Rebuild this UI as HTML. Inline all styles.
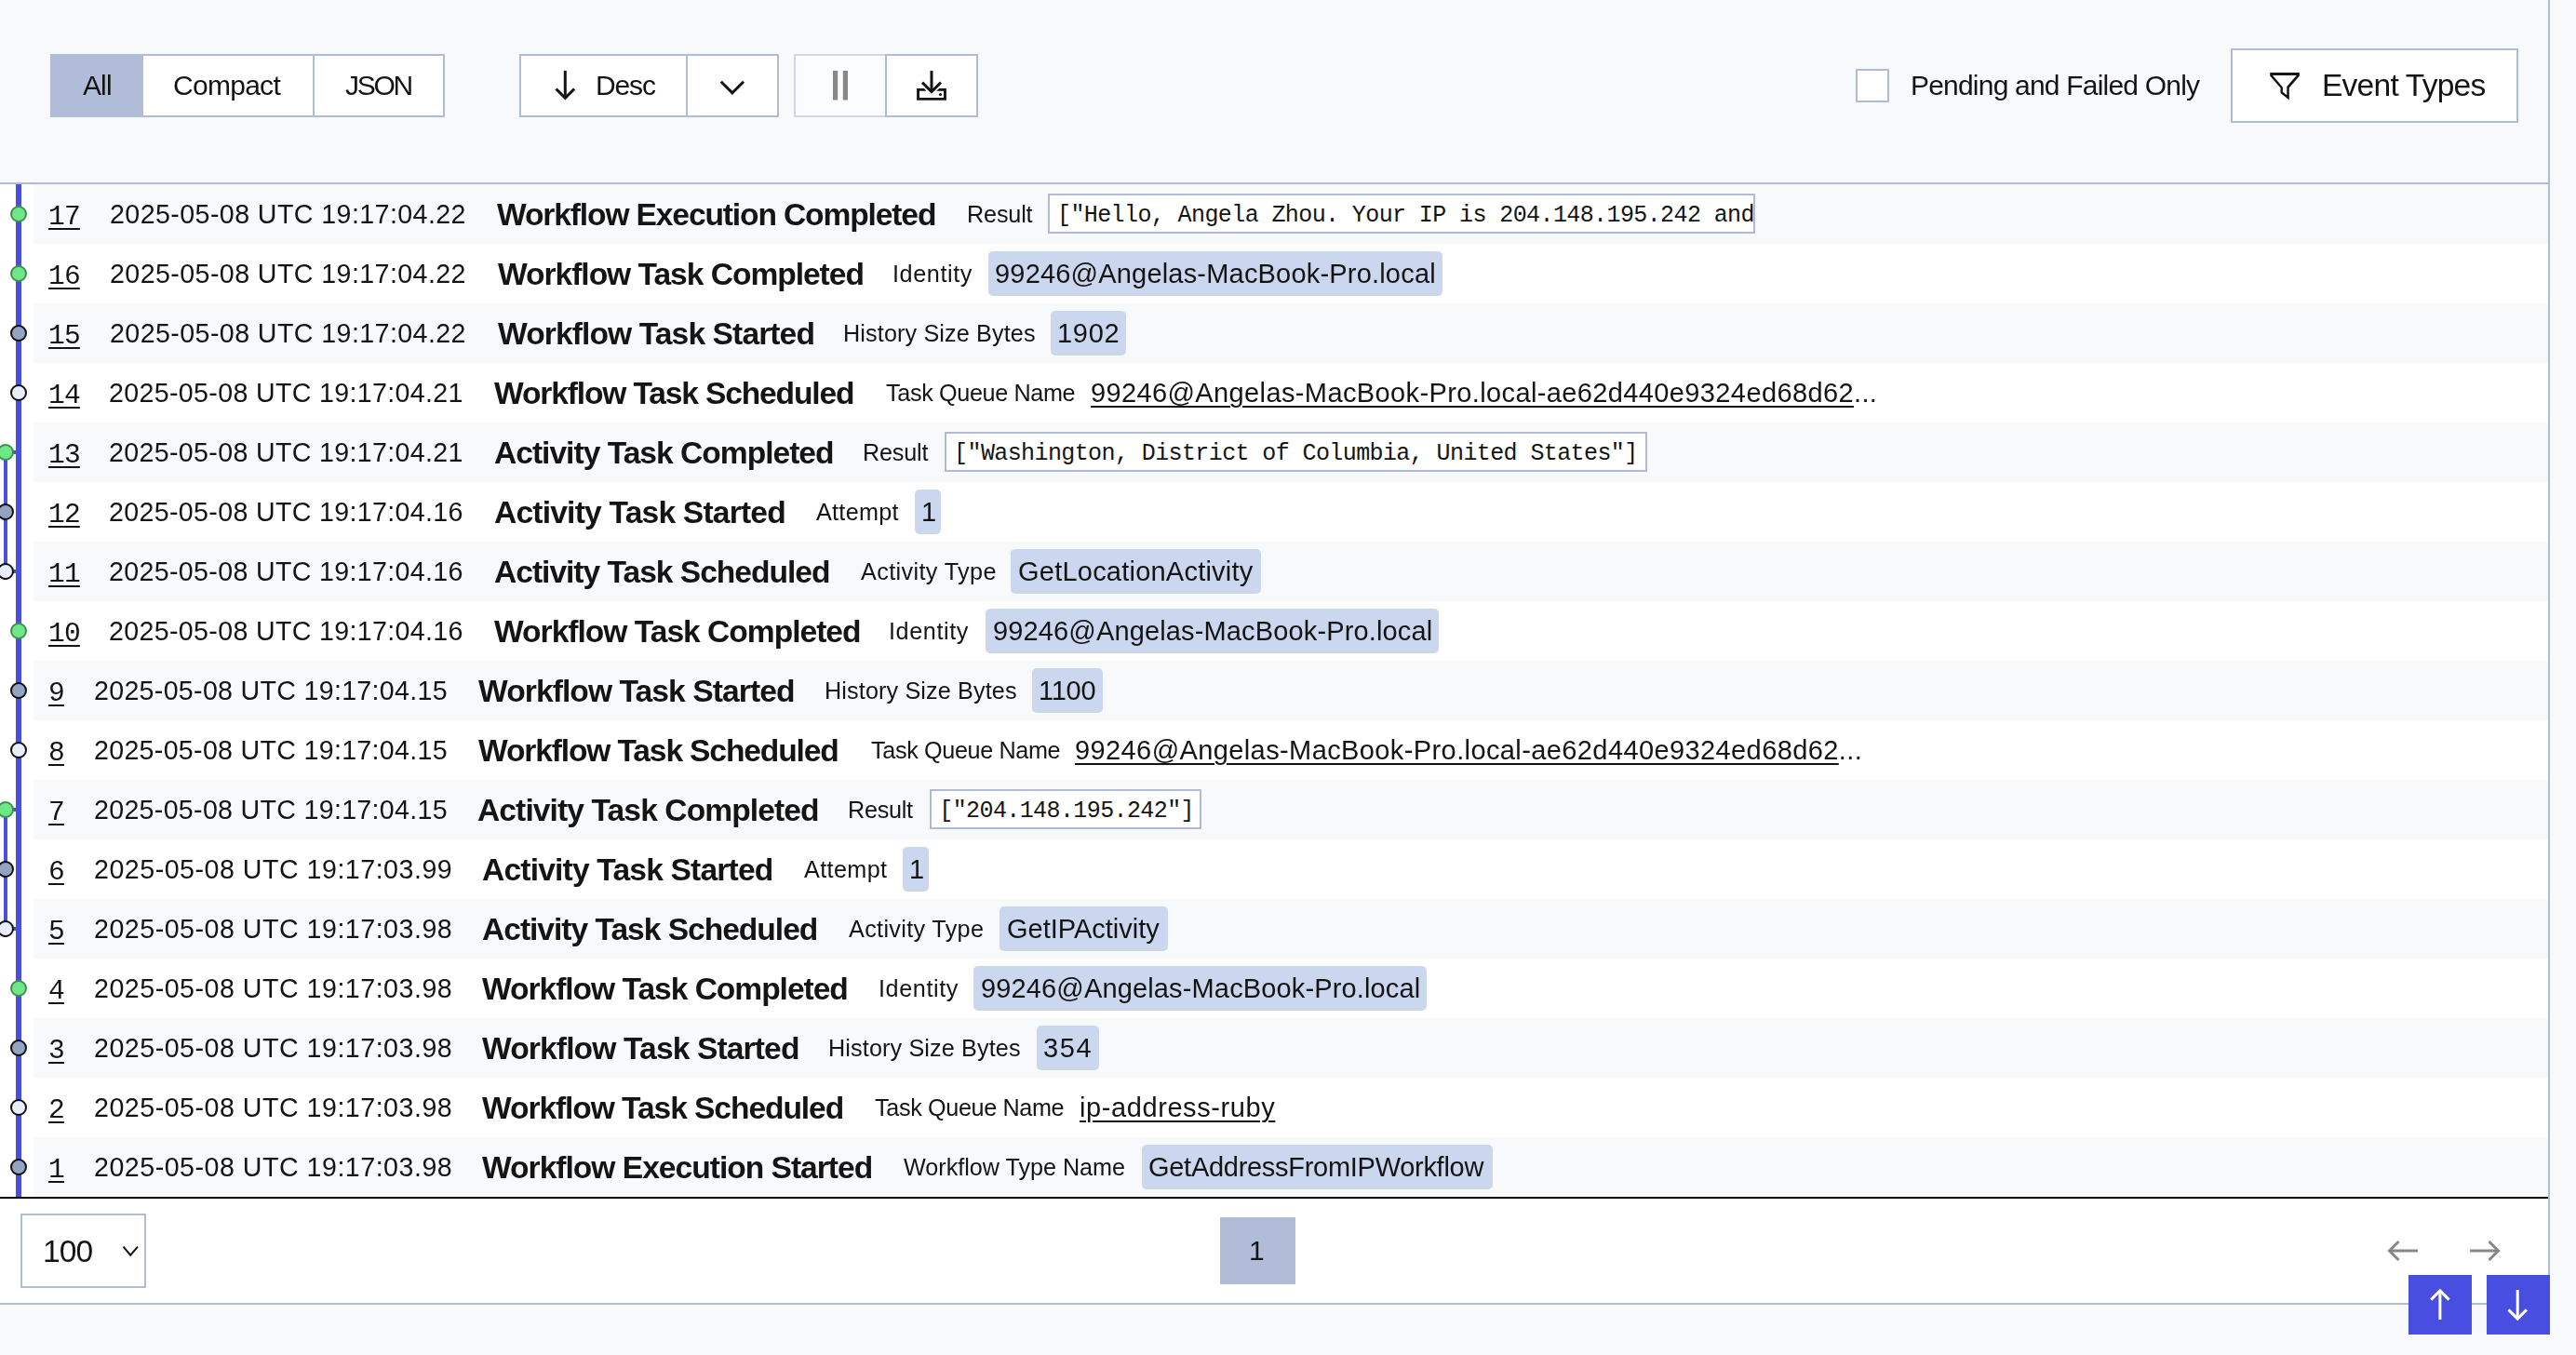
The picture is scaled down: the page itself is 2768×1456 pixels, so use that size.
<!DOCTYPE html><html><head><meta charset="utf-8"><style>
html,body{margin:0;padding:0;width:2768px;height:1456px;overflow:hidden;background:#f8f9fb;}
.t{position:absolute;white-space:pre;will-change:transform;}
.a{position:absolute;box-sizing:border-box;}
</style></head><body>

<div class=a style='left:0;top:0;width:2740px;height:1402px;border-right:2px solid #afbcd8;border-bottom:2px solid #afbcd8;background:#f8f9fb'></div>
<div class=a style='left:0;top:196px;width:2738px;height:2px;background:#afbcd8'></div>
<div class=a style='left:0;top:198px;width:2738px;height:1088px;background:#fff'></div>
<div class=a style='left:36px;top:198px;width:2702px;height:64px;background:#f8f9fb'></div>
<div class=a style='left:36px;top:326px;width:2702px;height:64px;background:#f8f9fb'></div>
<div class=a style='left:36px;top:454px;width:2702px;height:64px;background:#f8f9fb'></div>
<div class=a style='left:36px;top:582px;width:2702px;height:64px;background:#f8f9fb'></div>
<div class=a style='left:36px;top:710px;width:2702px;height:64px;background:#f8f9fb'></div>
<div class=a style='left:36px;top:838px;width:2702px;height:64px;background:#f8f9fb'></div>
<div class=a style='left:36px;top:966px;width:2702px;height:64px;background:#f8f9fb'></div>
<div class=a style='left:36px;top:1094px;width:2702px;height:64px;background:#f8f9fb'></div>
<div class=a style='left:36px;top:1222px;width:2702px;height:64px;background:#f8f9fb'></div>
<div class=a style='left:0;top:1286px;width:2738px;height:2px;background:#000'></div>
<div class=a style='left:0;top:1288px;width:2738px;height:112px;background:#fff'></div>
<div class=a style='left:54px;top:58px;width:424px;height:68px;background:#fff;border:2px solid #afbcd8;'></div>
<div class=a style='left:54px;top:58px;width:100px;height:68px;background:#b1bcd8'></div>
<div class=a style='left:336px;top:58px;width:2px;height:68px;background:#afbcd8'></div>
<div class=a style='left:558px;top:58px;width:279px;height:68px;background:#fff;border:2px solid #afbcd8;'></div>
<div class=a style='left:737px;top:58px;width:2px;height:68px;background:#afbcd8'></div>
<div class=a style='left:853px;top:58px;width:198px;height:68px;background:#fbfcfd;border:2px solid #d0d8e8;'></div>
<div class=a style='left:951px;top:58px;width:100px;height:68px;background:#fff;border:2px solid #afbcd8;'></div>
<div class=a style='left:1994px;top:74px;width:36px;height:36px;background:#fff;border:2px solid #afbcd8;'></div>
<div class=a style='left:2397px;top:52px;width:309px;height:80px;background:#fff;border:2px solid #afbcd8;'></div>
<div class=a style='left:22px;top:1304px;width:135px;height:80px;background:#fff;border:2px solid #afbcd8;'></div>
<div class=a style='left:1311px;top:1308px;width:81px;height:72px;background:#b1bcd8'></div>
<div class=a style='left:2588px;top:1370px;width:68px;height:64px;background:#474ee0'></div>
<div class=a style='left:2672px;top:1370px;width:68px;height:64px;background:#474ee0'></div>
<div class=t style="left:88.50px;top:71.60px;line-height:40px;font-family:'Liberation Sans',sans-serif;font-weight:400;font-size:30.0px;letter-spacing:-0.887px;color:#141414;">All</div>
<div class=t style="left:186.00px;top:71.60px;line-height:40px;font-family:'Liberation Sans',sans-serif;font-weight:400;font-size:30.0px;letter-spacing:-0.718px;color:#141414;">Compact</div>
<div class=t style="left:371.00px;top:71.60px;line-height:40px;font-family:'Liberation Sans',sans-serif;font-weight:400;font-size:30.0px;letter-spacing:-2.315px;color:#141414;">JSON</div>
<div class=t style="left:639.50px;top:71.70px;line-height:40px;font-family:'Liberation Sans',sans-serif;font-weight:400;font-size:30.0px;letter-spacing:-1.117px;color:#141414;">Desc</div>
<div class=t style="left:2053.40px;top:72.40px;line-height:40px;font-family:'Liberation Sans',sans-serif;font-weight:400;font-size:30.0px;letter-spacing:-0.798px;color:#141414;">Pending and Failed Only</div>
<div class=t style="left:2494.80px;top:72.40px;line-height:40px;font-family:'Liberation Sans',sans-serif;font-weight:400;font-size:33.6px;letter-spacing:-0.789px;color:#141414;">Event Types</div>
<div class=t style="left:46.40px;top:1324.80px;line-height:40px;font-family:'Liberation Sans',sans-serif;font-weight:400;font-size:33.6px;letter-spacing:-0.875px;color:#141414;">100</div>
<div class=t style="left:1342.40px;top:1324.00px;line-height:40px;font-family:'Liberation Sans',sans-serif;font-weight:400;font-size:30.0px;letter-spacing:0.000px;color:#141414;">1</div>
<div class=t style="left:52px;top:212.70px;line-height:40px;font-family:'Liberation Mono',monospace;font-weight:400;font-size:29.6px;letter-spacing:-0.860px;color:#141414;text-decoration:underline;text-decoration-thickness:2px;text-underline-offset:4px">17</div>
<div class=t style="left:118.20px;top:210.00px;line-height:40px;font-family:'Liberation Sans',sans-serif;font-weight:400;font-size:28.6px;letter-spacing:0.421px;color:#141414;">2025-05-08 UTC 19:17:04.22</div>
<div class=t style="left:534.40px;top:210.60px;line-height:40px;font-family:'Liberation Sans',sans-serif;font-weight:700;font-size:33.6px;letter-spacing:-1.137px;color:#141414;">Workflow Execution Completed</div>
<div class=t style="left:1038.50px;top:210.20px;line-height:40px;font-family:'Liberation Sans',sans-serif;font-weight:400;font-size:25.2px;letter-spacing:-0.159px;color:#141414;">Result</div>
<div class=a style="left:1126px;top:208.0px;width:760.0px;height:43px;background:#fff;border:2px solid #afbcd8;overflow:hidden;padding:0 8px;white-space:pre;line-height:39px;font-family:'Liberation Mono',monospace;font-weight:400;font-size:25.0px;letter-spacing:-0.600px;color:#141414"><span style='position:relative;top:1.5px'>[&quot;Hello, Angela Zhou. Your IP is 204.148.195.242 and your location is Washington, District of Columbia, United States&quot;]</span></div>
<div class=t style="left:52px;top:276.70px;line-height:40px;font-family:'Liberation Mono',monospace;font-weight:400;font-size:29.6px;letter-spacing:-0.860px;color:#141414;text-decoration:underline;text-decoration-thickness:2px;text-underline-offset:4px">16</div>
<div class=t style="left:118.20px;top:274.00px;line-height:40px;font-family:'Liberation Sans',sans-serif;font-weight:400;font-size:28.6px;letter-spacing:0.421px;color:#141414;">2025-05-08 UTC 19:17:04.22</div>
<div class=t style="left:534.60px;top:274.60px;line-height:40px;font-family:'Liberation Sans',sans-serif;font-weight:700;font-size:33.6px;letter-spacing:-1.035px;color:#141414;">Workflow Task Completed</div>
<div class=t style="left:958.60px;top:274.20px;line-height:40px;font-family:'Liberation Sans',sans-serif;font-weight:400;font-size:25.2px;letter-spacing:0.598px;color:#141414;">Identity</div>
<div class=a style='left:1061.7px;top:270.0px;width:488.2px;height:48px;background:#cbd7ee;border-radius:5px'></div>
<div class=t style="left:1069.20px;top:274.00px;line-height:40px;font-family:'Liberation Sans',sans-serif;font-weight:400;font-size:29.0px;letter-spacing:0.191px;color:#141414;">99246@Angelas-MacBook-Pro.local</div>
<div class=t style="left:52px;top:340.70px;line-height:40px;font-family:'Liberation Mono',monospace;font-weight:400;font-size:29.6px;letter-spacing:-0.860px;color:#141414;text-decoration:underline;text-decoration-thickness:2px;text-underline-offset:4px">15</div>
<div class=t style="left:118.20px;top:338.00px;line-height:40px;font-family:'Liberation Sans',sans-serif;font-weight:400;font-size:28.6px;letter-spacing:0.421px;color:#141414;">2025-05-08 UTC 19:17:04.22</div>
<div class=t style="left:534.60px;top:338.60px;line-height:40px;font-family:'Liberation Sans',sans-serif;font-weight:700;font-size:33.6px;letter-spacing:-0.898px;color:#141414;">Workflow Task Started</div>
<div class=t style="left:906.00px;top:338.20px;line-height:40px;font-family:'Liberation Sans',sans-serif;font-weight:400;font-size:25.2px;letter-spacing:0.132px;color:#141414;">History Size Bytes</div>
<div class=a style='left:1129.2px;top:334.0px;width:80.6px;height:48px;background:#cbd7ee;border-radius:5px'></div>
<div class=t style="left:1135.70px;top:338.00px;line-height:40px;font-family:'Liberation Sans',sans-serif;font-weight:400;font-size:29.0px;letter-spacing:0.738px;color:#141414;">1902</div>
<div class=t style="left:52px;top:404.70px;line-height:40px;font-family:'Liberation Mono',monospace;font-weight:400;font-size:29.6px;letter-spacing:-0.860px;color:#141414;text-decoration:underline;text-decoration-thickness:2px;text-underline-offset:4px">14</div>
<div class=t style="left:117.40px;top:402.00px;line-height:40px;font-family:'Liberation Sans',sans-serif;font-weight:400;font-size:28.6px;letter-spacing:0.337px;color:#141414;">2025-05-08 UTC 19:17:04.21</div>
<div class=t style="left:531.00px;top:402.60px;line-height:40px;font-family:'Liberation Sans',sans-serif;font-weight:700;font-size:33.6px;letter-spacing:-1.157px;color:#141414;">Workflow Task Scheduled</div>
<div class=t style="left:952.20px;top:402.20px;line-height:40px;font-family:'Liberation Sans',sans-serif;font-weight:400;font-size:25.2px;letter-spacing:-0.356px;color:#141414;">Task Queue Name</div>
<div class=t style="left:1171.50px;top:402.00px;line-height:40px;font-family:'Liberation Sans',sans-serif;font-weight:400;font-size:29.0px;letter-spacing:0.381px;color:#141414;"><span style='text-decoration:underline;text-decoration-thickness:2px;text-underline-offset:4px;text-decoration-skip-ink:auto'>99246@Angelas-MacBook-Pro.local-ae62d440e9324ed68d62</span>...</div>
<div class=t style="left:52px;top:468.70px;line-height:40px;font-family:'Liberation Mono',monospace;font-weight:400;font-size:29.6px;letter-spacing:-0.860px;color:#141414;text-decoration:underline;text-decoration-thickness:2px;text-underline-offset:4px">13</div>
<div class=t style="left:117.40px;top:466.00px;line-height:40px;font-family:'Liberation Sans',sans-serif;font-weight:400;font-size:28.6px;letter-spacing:0.337px;color:#141414;">2025-05-08 UTC 19:17:04.21</div>
<div class=t style="left:531.00px;top:466.60px;line-height:40px;font-family:'Liberation Sans',sans-serif;font-weight:700;font-size:33.6px;letter-spacing:-0.999px;color:#141414;">Activity Task Completed</div>
<div class=t style="left:926.90px;top:466.20px;line-height:40px;font-family:'Liberation Sans',sans-serif;font-weight:400;font-size:25.2px;letter-spacing:-0.199px;color:#141414;">Result</div>
<div class=a style="left:1015.1px;top:464.0px;width:754.6px;height:43px;background:#fff;border:2px solid #afbcd8;overflow:hidden;padding:0 8px;white-space:pre;line-height:39px;font-family:'Liberation Mono',monospace;font-weight:400;font-size:25.0px;letter-spacing:-0.600px;color:#141414"><span style='position:relative;top:1.5px'>[&quot;Washington, District of Columbia, United States&quot;]</span></div>
<div class=t style="left:52px;top:532.70px;line-height:40px;font-family:'Liberation Mono',monospace;font-weight:400;font-size:29.6px;letter-spacing:-0.860px;color:#141414;text-decoration:underline;text-decoration-thickness:2px;text-underline-offset:4px">12</div>
<div class=t style="left:117.40px;top:530.00px;line-height:40px;font-family:'Liberation Sans',sans-serif;font-weight:400;font-size:28.6px;letter-spacing:0.337px;color:#141414;">2025-05-08 UTC 19:17:04.16</div>
<div class=t style="left:531.00px;top:530.60px;line-height:40px;font-family:'Liberation Sans',sans-serif;font-weight:700;font-size:33.6px;letter-spacing:-0.799px;color:#141414;">Activity Task Started</div>
<div class=t style="left:877.30px;top:530.20px;line-height:40px;font-family:'Liberation Sans',sans-serif;font-weight:400;font-size:25.2px;letter-spacing:0.284px;color:#141414;">Attempt</div>
<div class=a style='left:983px;top:526.0px;width:28.4px;height:48px;background:#cbd7ee;border-radius:5px'></div>
<div class=t style="left:989.50px;top:530.00px;line-height:40px;font-family:'Liberation Sans',sans-serif;font-weight:400;font-size:29.0px;letter-spacing:0.000px;color:#141414;">1</div>
<div class=t style="left:52px;top:596.70px;line-height:40px;font-family:'Liberation Mono',monospace;font-weight:400;font-size:29.6px;letter-spacing:-0.860px;color:#141414;text-decoration:underline;text-decoration-thickness:2px;text-underline-offset:4px">11</div>
<div class=t style="left:117.40px;top:594.00px;line-height:40px;font-family:'Liberation Sans',sans-serif;font-weight:400;font-size:28.6px;letter-spacing:0.337px;color:#141414;">2025-05-08 UTC 19:17:04.16</div>
<div class=t style="left:531.00px;top:594.60px;line-height:40px;font-family:'Liberation Sans',sans-serif;font-weight:700;font-size:33.6px;letter-spacing:-1.013px;color:#141414;">Activity Task Scheduled</div>
<div class=t style="left:924.80px;top:594.20px;line-height:40px;font-family:'Liberation Sans',sans-serif;font-weight:400;font-size:25.2px;letter-spacing:0.378px;color:#141414;">Activity Type</div>
<div class=a style='left:1086px;top:590.0px;width:268.8px;height:48px;background:#cbd7ee;border-radius:5px'></div>
<div class=t style="left:1093.50px;top:594.00px;line-height:40px;font-family:'Liberation Sans',sans-serif;font-weight:400;font-size:29.0px;letter-spacing:0.226px;color:#141414;">GetLocationActivity</div>
<div class=t style="left:52px;top:660.70px;line-height:40px;font-family:'Liberation Mono',monospace;font-weight:400;font-size:29.6px;letter-spacing:-0.860px;color:#141414;text-decoration:underline;text-decoration-thickness:2px;text-underline-offset:4px">10</div>
<div class=t style="left:117.40px;top:658.00px;line-height:40px;font-family:'Liberation Sans',sans-serif;font-weight:400;font-size:28.6px;letter-spacing:0.337px;color:#141414;">2025-05-08 UTC 19:17:04.16</div>
<div class=t style="left:531.00px;top:658.60px;line-height:40px;font-family:'Liberation Sans',sans-serif;font-weight:700;font-size:33.6px;letter-spacing:-1.008px;color:#141414;">Workflow Task Completed</div>
<div class=t style="left:955.40px;top:658.20px;line-height:40px;font-family:'Liberation Sans',sans-serif;font-weight:400;font-size:25.2px;letter-spacing:0.598px;color:#141414;">Identity</div>
<div class=a style='left:1059px;top:654.0px;width:486.7px;height:48px;background:#cbd7ee;border-radius:5px'></div>
<div class=t style="left:1066.50px;top:658.00px;line-height:40px;font-family:'Liberation Sans',sans-serif;font-weight:400;font-size:29.0px;letter-spacing:0.141px;color:#141414;">99246@Angelas-MacBook-Pro.local</div>
<div class=t style="left:52px;top:724.70px;line-height:40px;font-family:'Liberation Mono',monospace;font-weight:400;font-size:29.6px;letter-spacing:-0.860px;color:#141414;text-decoration:underline;text-decoration-thickness:2px;text-underline-offset:4px">9</div>
<div class=t style="left:100.70px;top:722.00px;line-height:40px;font-family:'Liberation Sans',sans-serif;font-weight:400;font-size:28.6px;letter-spacing:0.305px;color:#141414;">2025-05-08 UTC 19:17:04.15</div>
<div class=t style="left:514.40px;top:722.60px;line-height:40px;font-family:'Liberation Sans',sans-serif;font-weight:700;font-size:33.6px;letter-spacing:-0.923px;color:#141414;">Workflow Task Started</div>
<div class=t style="left:885.50px;top:722.20px;line-height:40px;font-family:'Liberation Sans',sans-serif;font-weight:400;font-size:25.2px;letter-spacing:0.132px;color:#141414;">History Size Bytes</div>
<div class=a style='left:1109.3px;top:718.0px;width:75.4px;height:48px;background:#cbd7ee;border-radius:5px'></div>
<div class=t style="left:1115.80px;top:722.00px;line-height:40px;font-family:'Liberation Sans',sans-serif;font-weight:400;font-size:29.0px;letter-spacing:-0.278px;color:#141414;">1100</div>
<div class=t style="left:52px;top:788.70px;line-height:40px;font-family:'Liberation Mono',monospace;font-weight:400;font-size:29.6px;letter-spacing:-0.860px;color:#141414;text-decoration:underline;text-decoration-thickness:2px;text-underline-offset:4px">8</div>
<div class=t style="left:100.70px;top:786.00px;line-height:40px;font-family:'Liberation Sans',sans-serif;font-weight:400;font-size:28.6px;letter-spacing:0.305px;color:#141414;">2025-05-08 UTC 19:17:04.15</div>
<div class=t style="left:514.40px;top:786.60px;line-height:40px;font-family:'Liberation Sans',sans-serif;font-weight:700;font-size:33.6px;letter-spacing:-1.148px;color:#141414;">Workflow Task Scheduled</div>
<div class=t style="left:935.50px;top:786.20px;line-height:40px;font-family:'Liberation Sans',sans-serif;font-weight:400;font-size:25.2px;letter-spacing:-0.356px;color:#141414;">Task Queue Name</div>
<div class=t style="left:1154.80px;top:786.00px;line-height:40px;font-family:'Liberation Sans',sans-serif;font-weight:400;font-size:29.0px;letter-spacing:0.397px;color:#141414;"><span style='text-decoration:underline;text-decoration-thickness:2px;text-underline-offset:4px;text-decoration-skip-ink:auto'>99246@Angelas-MacBook-Pro.local-ae62d440e9324ed68d62</span>...</div>
<div class=t style="left:52px;top:852.70px;line-height:40px;font-family:'Liberation Mono',monospace;font-weight:400;font-size:29.6px;letter-spacing:-0.860px;color:#141414;text-decoration:underline;text-decoration-thickness:2px;text-underline-offset:4px">7</div>
<div class=t style="left:100.70px;top:850.00px;line-height:40px;font-family:'Liberation Sans',sans-serif;font-weight:400;font-size:28.6px;letter-spacing:0.305px;color:#141414;">2025-05-08 UTC 19:17:04.15</div>
<div class=t style="left:513.20px;top:850.60px;line-height:40px;font-family:'Liberation Sans',sans-serif;font-weight:700;font-size:33.6px;letter-spacing:-0.904px;color:#141414;">Activity Task Completed</div>
<div class=t style="left:911.10px;top:850.20px;line-height:40px;font-family:'Liberation Sans',sans-serif;font-weight:400;font-size:25.2px;letter-spacing:-0.279px;color:#141414;">Result</div>
<div class=a style="left:999.3px;top:848.0px;width:291.6px;height:43px;background:#fff;border:2px solid #afbcd8;overflow:hidden;padding:0 8px;white-space:pre;line-height:39px;font-family:'Liberation Mono',monospace;font-weight:400;font-size:25.0px;letter-spacing:-0.600px;color:#141414"><span style='position:relative;top:1.5px'>[&quot;204.148.195.242&quot;]</span></div>
<div class=t style="left:52px;top:916.70px;line-height:40px;font-family:'Liberation Mono',monospace;font-weight:400;font-size:29.6px;letter-spacing:-0.860px;color:#141414;text-decoration:underline;text-decoration-thickness:2px;text-underline-offset:4px">6</div>
<div class=t style="left:100.70px;top:914.00px;line-height:40px;font-family:'Liberation Sans',sans-serif;font-weight:400;font-size:28.6px;letter-spacing:0.509px;color:#141414;">2025-05-08 UTC 19:17:03.99</div>
<div class=t style="left:518.20px;top:914.60px;line-height:40px;font-family:'Liberation Sans',sans-serif;font-weight:700;font-size:33.6px;letter-spacing:-0.819px;color:#141414;">Activity Task Started</div>
<div class=t style="left:864.20px;top:914.20px;line-height:40px;font-family:'Liberation Sans',sans-serif;font-weight:400;font-size:25.2px;letter-spacing:0.368px;color:#141414;">Attempt</div>
<div class=a style='left:970.4px;top:910.0px;width:28.0px;height:48px;background:#cbd7ee;border-radius:5px'></div>
<div class=t style="left:976.90px;top:914.00px;line-height:40px;font-family:'Liberation Sans',sans-serif;font-weight:400;font-size:29.0px;letter-spacing:0.000px;color:#141414;">1</div>
<div class=t style="left:52px;top:980.70px;line-height:40px;font-family:'Liberation Mono',monospace;font-weight:400;font-size:29.6px;letter-spacing:-0.860px;color:#141414;text-decoration:underline;text-decoration-thickness:2px;text-underline-offset:4px">5</div>
<div class=t style="left:100.70px;top:978.00px;line-height:40px;font-family:'Liberation Sans',sans-serif;font-weight:400;font-size:28.6px;letter-spacing:0.509px;color:#141414;">2025-05-08 UTC 19:17:03.98</div>
<div class=t style="left:518.20px;top:978.60px;line-height:40px;font-family:'Liberation Sans',sans-serif;font-weight:700;font-size:33.6px;letter-spacing:-1.022px;color:#141414;">Activity Task Scheduled</div>
<div class=t style="left:912.20px;top:978.20px;line-height:40px;font-family:'Liberation Sans',sans-serif;font-weight:400;font-size:25.2px;letter-spacing:0.336px;color:#141414;">Activity Type</div>
<div class=a style='left:1074.3px;top:974.0px;width:180.3px;height:48px;background:#cbd7ee;border-radius:5px'></div>
<div class=t style="left:1081.80px;top:978.00px;line-height:40px;font-family:'Liberation Sans',sans-serif;font-weight:400;font-size:29.0px;letter-spacing:-0.003px;color:#141414;">GetIPActivity</div>
<div class=t style="left:52px;top:1044.70px;line-height:40px;font-family:'Liberation Mono',monospace;font-weight:400;font-size:29.6px;letter-spacing:-0.860px;color:#141414;text-decoration:underline;text-decoration-thickness:2px;text-underline-offset:4px">4</div>
<div class=t style="left:100.70px;top:1042.00px;line-height:40px;font-family:'Liberation Sans',sans-serif;font-weight:400;font-size:28.6px;letter-spacing:0.509px;color:#141414;">2025-05-08 UTC 19:17:03.98</div>
<div class=t style="left:518.00px;top:1042.60px;line-height:40px;font-family:'Liberation Sans',sans-serif;font-weight:700;font-size:33.6px;letter-spacing:-1.039px;color:#141414;">Workflow Task Completed</div>
<div class=t style="left:943.70px;top:1042.20px;line-height:40px;font-family:'Liberation Sans',sans-serif;font-weight:400;font-size:25.2px;letter-spacing:0.598px;color:#141414;">Identity</div>
<div class=a style='left:1046.4px;top:1038.0px;width:486.8px;height:48px;background:#cbd7ee;border-radius:5px'></div>
<div class=t style="left:1053.90px;top:1042.00px;line-height:40px;font-family:'Liberation Sans',sans-serif;font-weight:400;font-size:29.0px;letter-spacing:0.144px;color:#141414;">99246@Angelas-MacBook-Pro.local</div>
<div class=t style="left:52px;top:1108.70px;line-height:40px;font-family:'Liberation Mono',monospace;font-weight:400;font-size:29.6px;letter-spacing:-0.860px;color:#141414;text-decoration:underline;text-decoration-thickness:2px;text-underline-offset:4px">3</div>
<div class=t style="left:100.70px;top:1106.00px;line-height:40px;font-family:'Liberation Sans',sans-serif;font-weight:400;font-size:28.6px;letter-spacing:0.509px;color:#141414;">2025-05-08 UTC 19:17:03.98</div>
<div class=t style="left:518.00px;top:1106.60px;line-height:40px;font-family:'Liberation Sans',sans-serif;font-weight:700;font-size:33.6px;letter-spacing:-0.873px;color:#141414;">Workflow Task Started</div>
<div class=t style="left:890.20px;top:1106.20px;line-height:40px;font-family:'Liberation Sans',sans-serif;font-weight:400;font-size:25.2px;letter-spacing:0.132px;color:#141414;">History Size Bytes</div>
<div class=a style='left:1113.9px;top:1102.0px;width:67.6px;height:48px;background:#cbd7ee;border-radius:5px'></div>
<div class=t style="left:1121.40px;top:1106.00px;line-height:40px;font-family:'Liberation Sans',sans-serif;font-weight:400;font-size:29.0px;letter-spacing:1.672px;color:#141414;">354</div>
<div class=t style="left:52px;top:1172.70px;line-height:40px;font-family:'Liberation Mono',monospace;font-weight:400;font-size:29.6px;letter-spacing:-0.860px;color:#141414;text-decoration:underline;text-decoration-thickness:2px;text-underline-offset:4px">2</div>
<div class=t style="left:100.70px;top:1170.00px;line-height:40px;font-family:'Liberation Sans',sans-serif;font-weight:400;font-size:28.6px;letter-spacing:0.509px;color:#141414;">2025-05-08 UTC 19:17:03.98</div>
<div class=t style="left:518.00px;top:1170.60px;line-height:40px;font-family:'Liberation Sans',sans-serif;font-weight:700;font-size:33.6px;letter-spacing:-1.080px;color:#141414;">Workflow Task Scheduled</div>
<div class=t style="left:940.20px;top:1170.20px;line-height:40px;font-family:'Liberation Sans',sans-serif;font-weight:400;font-size:25.2px;letter-spacing:-0.356px;color:#141414;">Task Queue Name</div>
<div class=t style="left:1159.50px;top:1170.00px;line-height:40px;font-family:'Liberation Sans',sans-serif;font-weight:400;font-size:29.0px;letter-spacing:0.588px;color:#141414;"><span style='text-decoration:underline;text-decoration-thickness:2px;text-underline-offset:4px;text-decoration-skip-ink:auto'>ip-address-ruby</span></div>
<div class=t style="left:52px;top:1236.70px;line-height:40px;font-family:'Liberation Mono',monospace;font-weight:400;font-size:29.6px;letter-spacing:-0.860px;color:#141414;text-decoration:underline;text-decoration-thickness:2px;text-underline-offset:4px">1</div>
<div class=t style="left:100.70px;top:1234.00px;line-height:40px;font-family:'Liberation Sans',sans-serif;font-weight:400;font-size:28.6px;letter-spacing:0.509px;color:#141414;">2025-05-08 UTC 19:17:03.98</div>
<div class=t style="left:518.00px;top:1234.60px;line-height:40px;font-family:'Liberation Sans',sans-serif;font-weight:700;font-size:33.6px;letter-spacing:-1.003px;color:#141414;">Workflow Execution Started</div>
<div class=t style="left:971.40px;top:1234.20px;line-height:40px;font-family:'Liberation Sans',sans-serif;font-weight:400;font-size:25.2px;letter-spacing:-0.022px;color:#141414;">Workflow Type Name</div>
<div class=a style='left:1226.6px;top:1230.0px;width:377.4px;height:48px;background:#cbd7ee;border-radius:5px'></div>
<div class=t style="left:1234.10px;top:1234.00px;line-height:40px;font-family:'Liberation Sans',sans-serif;font-weight:400;font-size:29.0px;letter-spacing:-0.285px;color:#141414;">GetAddressFromIPWorkflow</div>
<svg class=a style='left:0;top:0' width='2768' height='1456'><g fill='none' stroke='#141414' stroke-width='3'><path d='M607.3 76 V105.5'/><path d='M597.5 95.5 L607.3 105.3 L617.1 95.5'/><path d='M774.8 87.7 L786.9 99.8 L799 87.7'/><path d='M1001 76 V98.5'/><path d='M991 88.6 L1001 98.6 L1011 88.6'/></g><path fill='#141414' d='M985.1 95.1 H992.9 L995.5 97.8 H988 V104.9 H1014 V97.8 H1006.3 L1009.1 95.1 H1016.9 V107.8 H985.1 Z'/><g fill='none' stroke='#141414' stroke-width='3'></g><circle cx='1010.5' cy='101.5' r='1.6' fill='#141414'/><rect x='895' y='76' width='5.2' height='31.5' fill='#888'/><rect x='905.8' y='76' width='5.2' height='31.5' fill='#888'/><path fill-rule='evenodd' fill='#141414' d='M2439.2 77.9 H2470.9 V81.6 L2459.7 94.5 L2459.9 107.4 L2450.5 100 V94.5 L2439.2 81.6 Z M2442 80.9 H2467.8 L2457.3 93 V102.3 L2452.9 98.8 V93.8 Z'/><path d='M132.5 1339.6 L140.2 1348.6 L148 1339.6' fill='none' stroke='#141414' stroke-width='2'/><g fill='none' stroke='#888' stroke-width='3'><path d='M2598 1344 H2567.5'/><path d='M2577.5 1334 L2567.5 1344 L2577.5 1354'/><path d='M2654 1344 H2684.5'/><path d='M2674.5 1334 L2684.5 1344 L2674.5 1354'/></g><g fill='none' stroke='#fff' stroke-width='3'><path d='M2621.9 1418 V1387.5'/><path d='M2612.2 1396.6 L2621.9 1386.9 L2631.6 1396.6'/><path d='M2705.2 1386 V1416.5'/><path d='M2695.5 1407.4 L2705.2 1417.1 L2714.9 1407.4'/></g><rect x='17' y='198' width='6' height='1088' fill='#474ee0'/><rect x='4' y='486.0' width='4' height='137.0' fill='#474ee0'/><rect x='14' y='484.0' width='4' height='4' fill='#474ee0'/><rect x='14' y='612.0' width='4' height='4' fill='#474ee0'/><rect x='4' y='870.0' width='4' height='137.0' fill='#474ee0'/><rect x='14' y='868.0' width='4' height='4' fill='#474ee0'/><rect x='14' y='996.0' width='4' height='4' fill='#474ee0'/><circle cx='20' cy='230.0' r='8' fill='#6ee787' stroke='#3a9150' stroke-width='2'/><circle cx='20' cy='294.0' r='8' fill='#6ee787' stroke='#3a9150' stroke-width='2'/><circle cx='20' cy='358.0' r='8' fill='#94a3c0' stroke='#111' stroke-width='2'/><circle cx='20' cy='422.0' r='8' fill='#e8edf8' stroke='#111' stroke-width='2'/><circle cx='6' cy='486.0' r='8' fill='#6ee787' stroke='#3a9150' stroke-width='2'/><circle cx='6' cy='550.0' r='8' fill='#94a3c0' stroke='#111' stroke-width='2'/><circle cx='6' cy='614.0' r='8' fill='#e8edf8' stroke='#111' stroke-width='2'/><circle cx='20' cy='678.0' r='8' fill='#6ee787' stroke='#3a9150' stroke-width='2'/><circle cx='20' cy='742.0' r='8' fill='#94a3c0' stroke='#111' stroke-width='2'/><circle cx='20' cy='806.0' r='8' fill='#e8edf8' stroke='#111' stroke-width='2'/><circle cx='6' cy='870.0' r='8' fill='#6ee787' stroke='#3a9150' stroke-width='2'/><circle cx='6' cy='934.0' r='8' fill='#94a3c0' stroke='#111' stroke-width='2'/><circle cx='6' cy='998.0' r='8' fill='#e8edf8' stroke='#111' stroke-width='2'/><circle cx='20' cy='1062.0' r='8' fill='#6ee787' stroke='#3a9150' stroke-width='2'/><circle cx='20' cy='1126.0' r='8' fill='#94a3c0' stroke='#111' stroke-width='2'/><circle cx='20' cy='1190.0' r='8' fill='#e8edf8' stroke='#111' stroke-width='2'/><circle cx='20' cy='1254.0' r='8' fill='#94a3c0' stroke='#111' stroke-width='2'/></svg>
</body></html>
